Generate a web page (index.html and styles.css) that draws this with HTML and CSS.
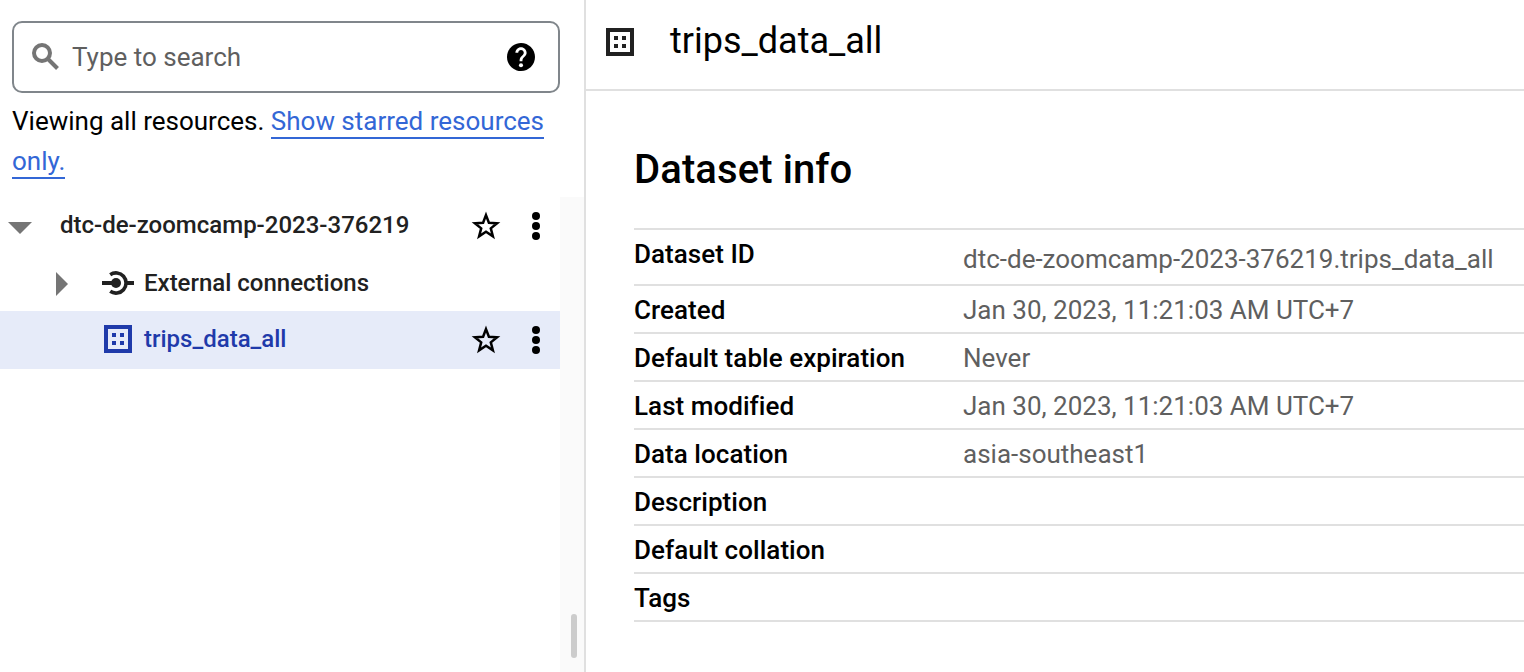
FILE: index.html
```html
<!DOCTYPE html>
<html lang="en">
<head>
<meta charset="utf-8">
<title>trips_data_all</title>
<link rel="stylesheet" href="styles.css">
</head>
<body>
<svg class="defs" aria-hidden="true">
  <symbol id="star" viewBox="0 0 32 32"><path fill="none" stroke="currentColor" stroke-width="2.5" d="M16 5.1l2.9 7.6 8.2.6-6.3 5.1 2.1 7.9-6.9-4.5-6.9 4.5 2.1-7.9-6.3-5.1 8.2-.6z"/></symbol>
  <symbol id="more" viewBox="0 0 8 28"><circle cx="4" cy="4" r="4"/><circle cx="4" cy="14" r="4"/><circle cx="4" cy="24" r="4"/></symbol>
  <symbol id="dataset" viewBox="0 0 28 28"><path fill-rule="evenodd" d="M0 0h28v28H0zM4 4v20h20V4z"/><path d="M8 8h4v4H8zM16 8h4v4h-4zM8 16h4v4H8zM16 16h4v4h-4z"/></symbol>
</svg>
<div class="app">
  <aside class="explorer">
    <div class="search">
      <svg class="search-icon" viewBox="0 0 28 28"><g fill="none" stroke="currentColor" stroke-width="4"><circle cx="10" cy="10" r="8"/><path d="M15.5 15.5l10 10"/></g></svg>
      <span class="placeholder">Type to search</span>
      <svg class="help-icon" viewBox="2 2 20 20"><path d="M12 2C6.48 2 2 6.48 2 12s4.48 10 10 10 10-4.48 10-10S17.52 2 12 2z"/><circle class="help-mark" cx="12" cy="17.9" r="1.45"/><path class="help-mark" d="M15.07 11.25l-.9.92C13.45 12.9 13 13.5 13 15h-2v-.5c0-1.1.45-2.1 1.17-2.83l1.24-1.26c.37-.36.59-.86.59-1.41 0-1.1-.9-2-2-2s-2 .9-2 2H8c0-2.21 1.79-4 4-4s4 1.79 4 4c0 .88-.36 1.68-.93 2.25z"/></svg>
    </div>
    <p class="notice">Viewing all resources. <a class="link">Show starred resources only.</a></p>
    <div class="tree-area">
      <div class="tree">
        <div class="row project">
          <svg class="arrow-down" viewBox="0 0 24 12"><path d="M0 0h24L12 12z"/></svg>
          <span class="label">dtc-de-zoomcamp-2023-376219</span>
          <svg class="star"><use href="#star"/></svg>
          <svg class="more"><use href="#more"/></svg>
        </div>
        <div class="row connections">
          <svg class="arrow-right" viewBox="0 0 12 24"><path d="M0 0v24l12-12z"/></svg>
          <svg class="plug" viewBox="0 0 32 24"><path d="M0 10h14v4H0zM24 10h8v4h-8z"/><circle cx="14" cy="12" r="5"/><path fill="none" stroke="currentColor" stroke-width="3.6" d="M8.2 3.7A10.1 10.1 0 1 1 8.2 20.3"/></svg>
          <span class="label">External connections</span>
        </div>
        <div class="row dataset selected">
          <svg class="dataset-icon"><use href="#dataset"/></svg>
          <span class="label">trips_data_all</span>
          <svg class="star"><use href="#star"/></svg>
          <svg class="more"><use href="#more"/></svg>
        </div>
      </div>
      <div class="gutter"><div class="thumb"></div></div>
    </div>
  </aside>
  <main class="detail">
    <header class="header">
      <svg class="dataset-icon"><use href="#dataset"/></svg>
      <h1 class="title">trips_data_all</h1>
    </header>
    <section class="info">
      <h2 class="heading">Dataset info</h2>
      <dl class="table">
        <div class="entry tall"><dt>Dataset ID</dt><dd>dtc-de-zoomcamp-2023-376219.trips_data_all</dd></div>
        <div class="entry"><dt>Created</dt><dd>Jan 30, 2023, 11:21:03 AM UTC+7</dd></div>
        <div class="entry"><dt>Default table expiration</dt><dd>Never</dd></div>
        <div class="entry"><dt>Last modified</dt><dd>Jan 30, 2023, 11:21:03 AM UTC+7</dd></div>
        <div class="entry"><dt>Data location</dt><dd>asia-southeast1</dd></div>
        <div class="entry"><dt>Description</dt><dd></dd></div>
        <div class="entry"><dt>Default collation</dt><dd></dd></div>
        <div class="entry"><dt>Tags</dt><dd></dd></div>
      </dl>
    </section>
  </main>
</div>
</body>
</html>
```
FILE: styles.css
```css
* { box-sizing: border-box; }
body { margin: 0; background: #fff; color: #000; font: 400 26px/40px Roboto, "Liberation Sans", sans-serif; }
svg { display: block; flex: none; fill: currentColor; }
h1, h2, p, dl, dt, dd { margin: 0; font-weight: 400; }
.defs { display: none; }
.app { display: flex; height: 672px; overflow: hidden; }

.explorer { width: 586px; flex: none; display: flex; flex-direction: column; border-right: 2px solid #e0e0e0; }
.search { display: flex; align-items: center; width: 548px; height: 72px; margin: 21px 0 0 12px; padding: 0 23px 0 18px; border: 2px solid #80868b; border-radius: 10px; }
.search-icon { width: 28px; height: 28px; color: #757575; }
.placeholder { flex: 1; margin-left: 12px; color: #5f5f5f; }
.help-icon { width: 28px; height: 28px; }
.help-mark { fill: #fff; }
.notice { width: 548px; height: 96px; margin: 8px 0 0 12px; }
.link { padding-bottom: 1px; color: #3367d6; border-bottom: 2px solid #3367d6; }

.tree-area { flex: 1; display: flex; }
.tree { width: 560px; color: #212121; font-size: 24px; font-weight: 500; }
.row { display: flex; align-items: center; height: 58px; padding-right: 20px; }
.row.connections { height: 56px; }
.label { flex: 1; }
.project .label, .selected .label { padding-bottom: 2px; }
.star { width: 32px; height: 32px; margin-right: 30px; color: #000; }
.more { width: 8px; height: 28px; color: #000; }
.arrow-down { width: 24px; height: 12px; margin: 4px 28px 0 8px; color: #757575; }
.arrow-right { width: 12px; height: 24px; margin: 2px 34px 0 56px; color: #757575; }
.plug { width: 32px; height: 24px; margin-right: 10px; }
.dataset-icon { width: 28px; height: 28px; }
.tree .dataset-icon { margin: 0 12px 2px 104px; }
.selected { background: #e6ebf9; color: #1f3aaa; }
.gutter { flex: 1; display: flex; align-items: flex-end; justify-content: flex-end; padding: 0 7px 14px 0; background: #fafafa; }
.thumb { width: 6px; height: 44px; border-radius: 3px; background: #ccc; }

.detail { flex: 1; min-width: 0; }
.header { display: flex; align-items: center; height: 91px; padding: 0 0 6px 20px; border-bottom: 2px solid #e0e0e0; }
.header .dataset-icon { color: #212121; }
.title { margin-left: 36px; padding-bottom: 2px; font-size: 36px; }
.info { padding: 55px 0 0 48px; }
.heading { height: 82px; font-size: 40px; line-height: 48px; font-weight: 500; letter-spacing: 0.1px; }
.table { border-top: 2px solid #e0e0e0; }
.entry { display: flex; height: 48px; padding-top: 4px; border-bottom: 2px solid #e0e0e0; }
.entry dt { width: 329px; flex: none; font-weight: 500; letter-spacing: 0.04px; }
.entry dd { color: #5f5f5f; white-space: nowrap; }
.tall { height: 56px; }
.tall dd { padding-top: 5px; }
```
